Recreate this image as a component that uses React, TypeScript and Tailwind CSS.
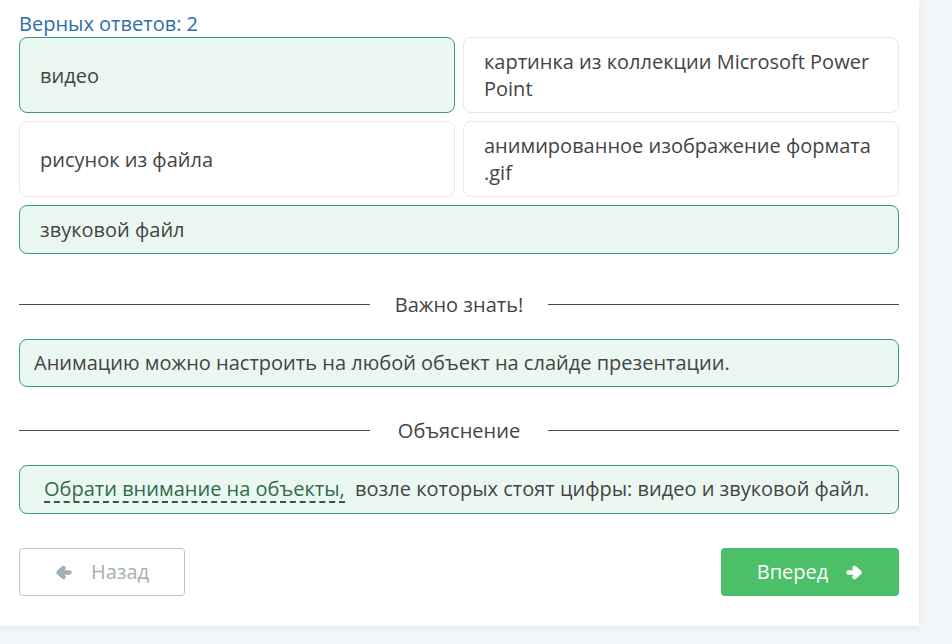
const answers = [
  { text: 'видео', correct: true },
  { text: 'картинка из коллекции Microsoft Power Point', correct: false },
  { text: 'рисунок из файла', correct: false },
  { text: 'анимированное изображение формата .gif', correct: false },
  { text: 'звуковой файл', correct: true, wide: true },
];

function Arrow({ left }: { left?: boolean }) {
  return (
    <svg width="17" height="15" viewBox="0 0 17 15" className={left ? 'rotate-180' : ''}>
      <g fill="none" stroke="currentColor" strokeWidth="4.4" strokeLinecap="round" strokeLinejoin="round">
        <path d="M2.5 7.5H13" />
        <path d="M8.5 3L13.5 7.5L8.5 12" />
      </g>
    </svg>
  );
}

function Divider({ label }: { label: string }) {
  return (
    <div className="flex items-center">
      <div className="flex-1 h-px bg-[#4a4a4a]" />
      <div className="w-[178px] text-center text-[20px] leading-[27px] text-[#444]">{label}</div>
      <div className="flex-1 h-px bg-[#4a4a4a]" />
    </div>
  );
}

export default function App() {
  return (
    <div className="min-h-screen bg-[#f3f6f9] font-['Open_Sans',sans-serif]">
      <div className="w-[919px] h-[626px] bg-white shadow-[0_2px_8px_rgba(0,0,0,0.06)] pl-[19px] pr-[20px] pt-[10px]">
        <div className="text-[20px] leading-[27px] text-[#2d6ea6]">Верных ответов: 2</div>

        <div className="grid grid-cols-2 gap-2">
          {answers.map((a) => (
            <div
              key={a.text}
              className={`flex items-center rounded-lg border px-5 py-[10px] text-[20px] leading-[27px] text-[#444] ${
                a.wide ? 'col-span-2' : ''
              } ${a.correct ? 'bg-[#ebf8f2] border-[#3b998a]' : 'bg-white border-[#e8e8e8]'}`}
            >
              {a.text}
            </div>
          ))}
        </div>

        <div className="mt-[37px]">
          <Divider label="Важно знать!" />
        </div>

        <div className="mt-[21px] rounded-lg border border-[#3b998a] bg-[#ebf8f2] px-[14px] py-[10px] text-[20px] leading-[26px] text-[#444]">
          Анимацию можно настроить на любой объект на слайде презентации.
        </div>

        <div className="mt-[30px]">
          <Divider label="Объяснение" />
        </div>

        <div className="mt-[21px] rounded-lg border border-[#3b998a] bg-[#ebf8f2] pl-6 pr-[14px] py-[10px] text-[20px] leading-[26px] text-[#444]">
          <span className="inline-block leading-[25px] text-[#2f6b4c] border-b-2 border-dashed border-[#2f5a44]">Обрати внимание на объекты,</span>
          &nbsp;&nbsp;возле которых стоят цифры: видео и звуковой файл.
        </div>

        <div className="mt-[34px] flex justify-between">
          <button className="flex h-12 w-[166px] items-center justify-center gap-[19px] rounded border border-[#bcc5cb] bg-white text-[20px] text-[#a2b0b9]">
            <Arrow left />
            Назад
          </button>
          <button className="flex h-12 w-[178px] items-center justify-center gap-[18px] rounded bg-[#4cbf69] text-[20px] text-white">
            Вперед
            <Arrow />
          </button>
        </div>
      </div>
    </div>
  );
}
